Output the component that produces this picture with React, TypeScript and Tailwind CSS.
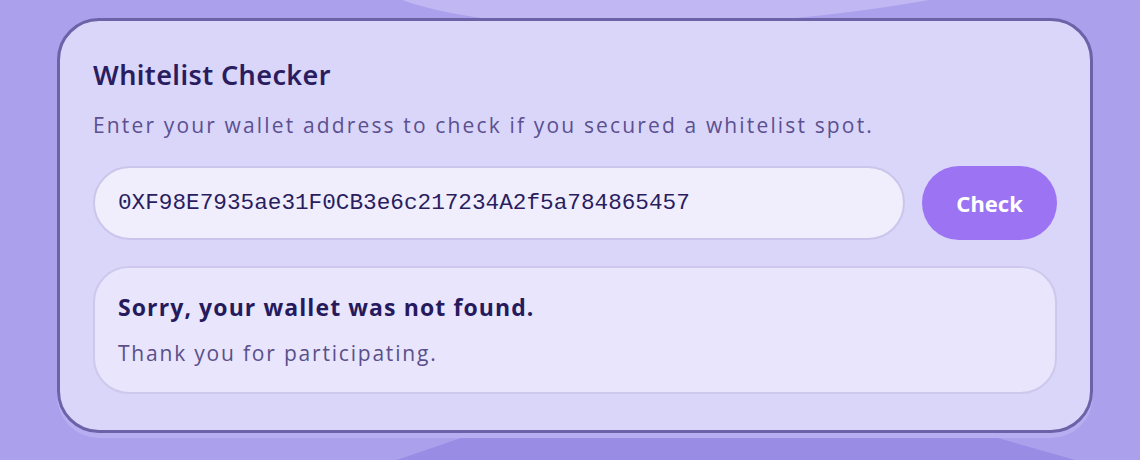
import React from "react";

export default function App() {
  return (
    <div className="relative w-[1140px] h-[460px] overflow-hidden bg-[#aba0ec]" style={{ fontFamily: "'Noto Sans', sans-serif" }}>
      {/* decorations */}
      <div className="absolute left-[360px] top-[-160px] w-[820px] h-[180px] rounded-[50%] bg-[#c0b7f3] -rotate-[5deg]" />
      <div
        className="absolute left-[396px] top-[437px] w-[680px] h-[40px] bg-[#998ce5]"
        style={{ clipPath: "polygon(10% 0, 88% 0, 100% 58%, 100% 100%, 0 100%, 0 58%)" }}
      />
      <div className="relative pt-[18px] pl-[57px]">
        <div className="w-[1036px] h-[415px] rounded-[42px] border-[3px] border-[#6b62a8] bg-[#dad6f9] shadow-[0_5px_0_#b7adf1] px-[33px] pt-[38px] flex flex-col">
          <h1 className="text-[27px] leading-[32px] font-semibold text-[#2a1d5f] tracking-[0.4px]">Whitelist Checker</h1>
          <p className="mt-[21px] text-[21px] leading-[26px] text-[#5b5090] tracking-[2.15px]" style={{ fontFamily: "'Open Sans', sans-serif" }}>
            Enter your wallet address to check if you secured a whitelist spot.
          </p>
          <div className="mt-[28px] flex items-center gap-[17px]">
            <div className="w-[813px] h-[74px] rounded-full border-2 border-[#cbc5ec] bg-[#f0eefc] flex items-center pl-[23px]">
              <span className="text-[22.7px] text-[#2a1d5f]" style={{ fontFamily: "'Liberation Mono', monospace" }}>
                0XF98E7935ae31F0CB3e6c217234A2f5a784865457
              </span>
            </div>
            <button className="w-[135px] h-[74px] rounded-full bg-[#9b73f3] text-white text-[22px] font-bold">Check</button>
          </div>
          <div className="mt-[26px] w-[964px] h-[128px] rounded-[36px] border-2 border-[#cdc8ec] bg-[#e8e5fc] pl-[23px] pt-[24px]">
            <div className="text-[23px] leading-[30px] font-bold text-[#261a5c] tracking-[1.1px]" style={{ fontFamily: "'Open Sans', sans-serif" }}>
              Sorry, your wallet was not found.
            </div>
            <div className="mt-[17px] text-[21px] leading-[28px] text-[#5a4f8a] tracking-[1.8px]" style={{ fontFamily: "'Open Sans', sans-serif" }}>
              Thank you for participating.
            </div>
          </div>
        </div>
      </div>
    </div>
  );
}
